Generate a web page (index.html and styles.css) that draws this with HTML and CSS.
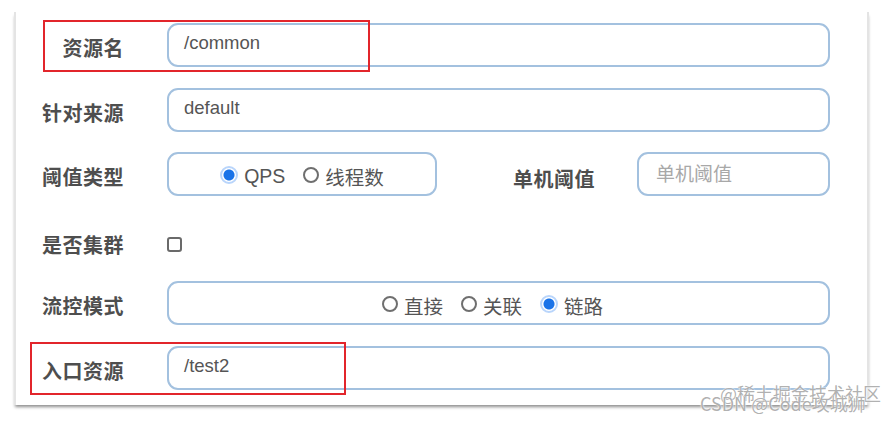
FILE: index.html
```html
<!DOCTYPE html>
<html lang="zh-CN">
<head>
  <meta charset="UTF-8" />
  <title>流控规则</title>
  <link rel="stylesheet" href="styles.css">
</head>
<body>
  <div class="panel">
    <div class="form">
      <label class="label">资源名</label>
      <div class="field">
        <div class="input">/common</div>
      </div>

      <label class="label">针对来源</label>
      <div class="field">
        <div class="input">default</div>
      </div>

      <label class="label">阈值类型</label>
      <div class="field split">
        <div class="input radios type-box">
          <span class="radio checked"></span><span class="opt">QPS</span>
          <span class="radio"></span><span class="opt">线程数</span>
        </div>
        <label class="label side">单机阈值</label>
        <div class="input small placeholder">单机阈值</div>
      </div>

      <label class="label low">是否集群</label>
      <div class="field low">
        <span class="checkbox"></span>
      </div>

      <label class="label">流控模式</label>
      <div class="field">
        <div class="input radios mode-box">
          <span class="radio"></span><span class="opt">直接</span>
          <span class="radio"></span><span class="opt">关联</span>
          <span class="radio checked"></span><span class="opt">链路</span>
        </div>
      </div>

      <label class="label">入口资源</label>
      <div class="field">
        <div class="input">/test2</div>
      </div>
    </div>

    <div class="mark mark-top"></div>
    <div class="mark mark-bottom"></div>
  </div>

  <div class="watermark">
    <span class="wm wm-a">@稀土掘金技术社区</span>
    <span class="wm wm-b">CSDN @Code攻城狮</span>
  </div>
</body>
</html>
```

FILE: styles.css
```css
body {
  margin: 0;
  background: #fff;
  font-family: "Liberation Sans", "Noto Sans CJK SC", sans-serif;
  color: #555;
  width: 893px;
  height: 424px;
  overflow: hidden;
  position: relative;
}

.panel {
  position: relative;
  margin: 12px 0 0 14px;
  width: 855px;
  height: 393px;
  border-left: 2px solid #e4e4e4;
  border-right: 2px solid #e4e4e4;
  box-shadow: 0 3px 3px -1px rgba(0, 0, 0, 0.45);
  box-sizing: border-box;
  padding-top: 11px;
}

.form {
  display: grid;
  grid-template-columns: 108px 663px;
  grid-auto-rows: 44px;
  column-gap: 43px;
  row-gap: 20.5px;
}

.label {
  display: flex;
  align-items: center;
  justify-content: flex-end;
  padding-top: 5px;
  font-family: "Noto Sans CJK SC", sans-serif;
  font-weight: bold;
  font-size: 20px;
  color: #4e4e4e;
  letter-spacing: 0.5px;
}

.field {
  display: flex;
  align-items: center;
}

.low {
  padding-top: 11px;
  box-sizing: border-box;
}

.input {
  flex: 1;
  height: 44px;
  box-sizing: border-box;
  border: 2px solid #a3c1df;
  border-radius: 11px;
  padding: 0 15px 4px;
  display: flex;
  align-items: center;
  font-size: 18.5px;
  color: #555;
}

.split .type-box {
  flex: 0 0 270px;
}

.label.side {
  flex: 1;
  padding-right: 42px;
  padding-top: 8px;
}

.input.small {
  flex: 0 0 193px;
  padding-left: 17px;
}

.placeholder {
  font-family: "Noto Sans CJK SC", sans-serif;
  font-size: 19px;
  color: #a8a8a8;
}

.radios {
  justify-content: center;
  padding: 4px 0 0;
  font-family: "Liberation Sans", "Noto Sans CJK SC", sans-serif;
}

.mode-box {
  padding-right: 12px;
}

.radio {
  width: 16px;
  height: 16px;
  box-sizing: border-box;
  border: 2px solid #6f6f6f;
  border-radius: 50%;
  margin: 0 6px 2px 0;
}

.radio.checked {
  border: 2px solid #b9d5fb;
  background: radial-gradient(circle, #1a73e8 0 5px, transparent 6px);
  width: 18px;
  height: 18px;
}

.opt {
  margin-right: 18px;
  font-size: 19.5px;
  color: #555;
}

.opt:last-child {
  margin-right: 0;
}

.checkbox {
  width: 15px;
  height: 15px;
  box-sizing: border-box;
  border: 2px solid #6a6a6a;
  border-radius: 3px;
}

.mark {
  position: absolute;
  box-sizing: border-box;
  border: 2px solid #e2252b;
}

.mark-top {
  left: 27px;
  top: 8px;
  width: 327px;
  height: 52px;
}

.mark-bottom {
  left: 14px;
  top: 330px;
  width: 316px;
  height: 53px;
}

.watermark {
  position: absolute;
  left: 700px;
  top: 384px;
  width: 180px;
  height: 36px;
}

.wm {
  position: absolute;
  font-family: "Noto Sans CJK SC", sans-serif;
  font-size: 18px;
  color: rgba(110, 110, 110, 0.55);
  text-shadow: 0 0 1px #fff, 0 0 2px #fff;
  white-space: nowrap;
}

.wm-a {
  left: 20px;
  top: -4px;
}

.wm-b {
  left: 0;
  top: 6px;
}
```
